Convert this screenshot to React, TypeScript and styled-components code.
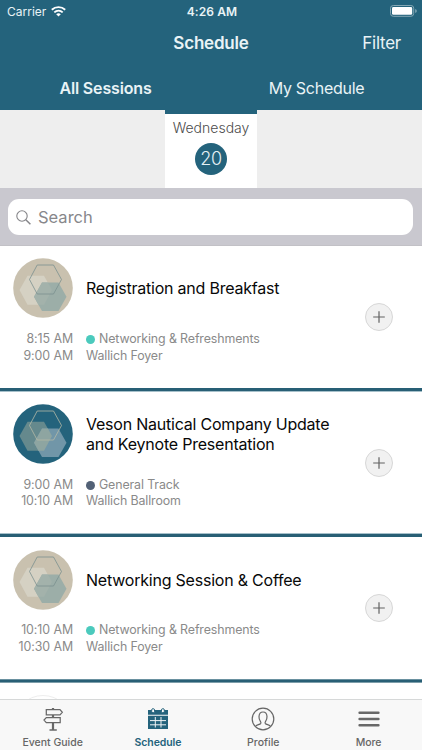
import React from 'react';
import styled, { createGlobalStyle, css } from 'styled-components';

const teal = '#24637c';

const GlobalStyle = createGlobalStyle`
  * { box-sizing: border-box; }
  body { margin: 0; background: #fff; font-family: Inter, "Liberation Sans", sans-serif; }
`;

const Screen = styled.div`
  width: 422px;
  height: 750px;
  display: flex;
  flex-direction: column;
  overflow: hidden;
  background: #fff;
`;

const Header = styled.header`
  flex: none;
  height: 110px;
  background: ${teal};
  color: #e9f3f6;
`;

const StatusBar = styled.div`
  height: 22px;
  display: grid;
  grid-template-columns: 1fr auto 1fr;
  align-items: center;
  padding: 0 5px 0 7px;
`;

const Carrier = styled.div`
  display: flex;
  align-items: center;
  gap: 5px;
`;

type TextProps = { $size: number; $weight?: number; $spacing?: number };
const Text = styled.span<TextProps>`
  display: block;
  white-space: nowrap;
  font-size: ${p => p.$size}px;
  font-weight: ${p => p.$weight ?? 400};
  letter-spacing: ${p => p.$spacing ?? 0}px;
`;

const BatterySlot = styled.div`
  display: flex;
  justify-content: flex-end;
`;

const NavBar = styled.div`
  height: 42px;
  display: grid;
  grid-template-columns: 1fr auto 1fr;
  align-items: center;
  padding: 0 21px;
`;

const FilterButton = styled(Text)`
  justify-self: end;
`;

const Segments = styled.div`
  height: 46px;
  display: grid;
  grid-template-columns: 1fr 1fr;
  justify-items: center;
  padding-top: 14px;
  line-height: 20px;
`;

const DateStrip = styled.div`
  flex: none;
  height: 78px;
  display: flex;
  justify-content: center;
  background: #eeeeee;
`;

const Day = styled.div`
  width: 92px;
  display: flex;
  flex-direction: column;
  align-items: center;
  border-top: 4px solid ${teal};
  background: #fff;
  color: #4c4c4c;
  line-height: 28px;
`;

const DayNumber = styled.div`
  width: 32px;
  height: 32px;
  margin-top: 1px;
  border-radius: 50%;
  display: flex;
  align-items: center;
  justify-content: center;
  background: ${teal};
  color: #e4f0f4;
`;

const SearchBar = styled.div`
  flex: none;
  height: 58px;
  padding: 11px 9px 10px 8px;
  background: #c9c8cf;
  border-bottom: 1px solid #c2c1c6;
`;

const SearchField = styled.div`
  height: 36px;
  border-radius: 11px;
  display: flex;
  align-items: center;
  padding-left: 8px;
  gap: 7px;
  background: #fff;
  color: #87878b;
`;

const List = styled.main`
  flex: 1;
  min-height: 0;
  overflow: hidden;
`;

const Row = styled.article`
  height: 145.6px;
  display: flex;
  flex-direction: column;
`;

const RowBody = styled.div`
  flex: 1;
  display: grid;
  grid-template-columns: 60px 1fr 28px;
  grid-template-rows: 60px 34px;
  column-gap: 13px;
  row-gap: 12.7px;
  padding: 12.4px 29px 0 13px;
`;

const Titles = styled.div`
  align-self: center;
  padding-top: 1.6px;
  line-height: 19.6px;
  color: #080808;
`;

const Times = styled.div`
  grid-row: 2;
  grid-column: 1;
  display: flex;
  flex-direction: column;
  align-items: flex-end;
  line-height: 16.7px;
  color: #8a8a8a;
`;

const Details = styled.div`
  grid-row: 2;
  grid-column: 2;
  line-height: 16.7px;
  color: #8a8a8a;
`;

const Track = styled.div`
  display: flex;
  align-items: center;
  gap: 4px;
`;

const Dot = styled.i<{ $color: string }>`
  width: 9px;
  height: 9px;
  border-radius: 50%;
  background: ${p => p.$color};
`;

const AddButton = styled.button`
  grid-column: 3;
  grid-row: 1 / 3;
  width: 28px;
  height: 28px;
  margin-top: 44.6px;
  padding: 0;
  border: 1px solid #d7d7d7;
  border-radius: 50%;
  display: grid;
  place-items: center;
  background: #f1f1f1;
`;

const Divider = styled.div<{ $top: string; $bottom: string }>`
  flex: none;
  height: 4px;
  background: linear-gradient(${p => p.$top} 1px, #285f75 1px 3px, ${p => p.$bottom} 3px);
`;

const NextAvatar = styled.div`
  width: 60px;
  height: 60px;
  margin: 12px 13px;
  border: 1px solid #eeeeee;
  border-radius: 50%;
`;

const TabBar = styled.nav`
  flex: none;
  height: 51px;
  display: grid;
  grid-template-columns: repeat(4, 105.3px);
  border-top: 1px solid #d6d8d8;
  background: #f8f8f8;
`;

const Tab = styled.div<{ $active?: boolean }>`
  display: flex;
  flex-direction: column;
  align-items: center;
  padding-top: 6px;
  color: #666;
  line-height: 16px;
  ${p => p.$active && css`color: ${teal};`}
  svg { display: block; height: 26px; margin-bottom: 3px; }
`;

function HexAvatar({ dark }: { dark?: boolean }) {
  return (
    <svg width="60" height="60" viewBox="0 0 60 60">
      <circle cx="30" cy="30" r="29.8" fill={dark ? teal : '#c9c1af'} />
      <path d="M6.5 32 14.5 17.8H31L39 32 31 46.7H14.5Z" fill={dark ? '#65898d' : '#d5d1c3'} />
      <path d="M21 38.8 29 24.5H45.5L53.5 38.8 45.5 53H29Z" fill={dark ? '#7196a8' : '#9caea8'} />
      <path d="M29 24.5H34.9L39 32 31 46.7H25.4L21 38.8Z" fill={dark ? '#8ea5a1' : '#a3b2ab'} />
      <path d="M16.5 21.5 24.2 7H40.5L48.5 21.5 40.5 36H24.2Z" fill="none" stroke={dark ? '#b5b9a6' : '#7b918f'} strokeWidth=".8" />
    </svg>
  );
}

const WifiIcon = () => (
  <svg width="15" height="11" viewBox="0 0 15 11" fill="none" stroke="#fff" strokeWidth="1.9">
    <path d="M.8 3.8C4.6.2 10.4.2 14.2 3.8M3.3 6.4c2.4-2.2 6-2.2 8.4 0" />
    <path d="M5.2 8.2c1.3-1.2 3.3-1.2 4.6 0L7.5 10.5Z" fill="#fff" stroke="none" />
  </svg>
);

const BatteryIcon = () => (
  <svg width="27" height="12" viewBox="0 0 27 12">
    <rect x=".5" y=".5" width="23.2" height="10.8" rx="2.8" fill="none" stroke="#84a7b4" />
    <rect x="2" y="2" width="20.2" height="7.8" rx="1.4" fill="#fff" />
    <path d="M25 4q2 .4 2 2t-2 2Z" fill="#6f9aaa" />
  </svg>
);

const SearchIcon = () => (
  <svg width="15" height="15" viewBox="0 0 15 15" fill="none" stroke="#858589" strokeWidth="1.1">
    <circle cx="6" cy="6" r="5.2" />
    <path d="m9.8 9.8 4.6 4.4" strokeWidth="1.5" />
  </svg>
);

const PlusIcon = () => (
  <svg width="12" height="12" viewBox="0 0 12 12" stroke="#626262" strokeWidth="1.2">
    <path d="M6 .2V11.8M.2 6H11.8" />
  </svg>
);

const SignpostIcon = () => (
  <svg width="22" height="26" viewBox="0 0 22 26" fill="none" stroke="#686868" strokeWidth="1.25">
    <path d="M4.3 3.7H18L20.3 6.3 18 8.9H4.3ZM18.2 11.5H4.3L2 14.1 4.3 16.7H18.2Z" />
    <path d="M11 2V3.7M11 8.9V11.5M11 16.7V24" strokeWidth="2.2" />
    <path d="M7.5 24H14.8" strokeWidth="1.5" />
  </svg>
);

const CalendarIcon = () => (
  <svg width="22" height="26" viewBox="0 0 22 26" fill="none">
    <path d="M1 4H21V8.8H1ZM1 9.8H21V23H1Z" fill={teal} />
    <path d="M3 14.6H19M3 18.8H19M8.3 11V21.5M14 11V21.5" stroke="#f0f4f5" />
    <rect x="4.7" y="2.7" width="2.8" height="4" rx="1.2" fill="#f8f8f8" stroke={teal} />
    <rect x="14.5" y="2.7" width="2.8" height="4" rx="1.2" fill="#f8f8f8" stroke={teal} />
  </svg>
);

const ProfileIcon = () => (
  <svg width="24" height="26" viewBox="0 0 24 26" fill="none" stroke="#666" strokeWidth="1.2">
    <circle cx="12" cy="13" r="10.8" />
    <path d="M4.4 20.5C5.2 18.8 8.6 18.7 9.7 17.5 10.2 16.9 9.9 16.2 9.4 15.4 8.2 13.7 7.9 12.3 8 10.6 8.1 7.9 9.6 6 12 6s3.9 1.9 4 4.6c.1 1.7-.2 3.1-1.4 4.8-.5.8-.8 1.5-.3 2.1 1.1 1.2 4.5 1.3 5.3 3" />
  </svg>
);

const MenuIcon = () => (
  <svg width="22" height="26" viewBox="0 0 22 26" stroke="#686868" strokeWidth="2.5" strokeLinecap="round">
    <path d="M1.6 6.7H20.4M1.6 13H20.4M1.6 19.3H20.4" />
  </svg>
);

type Session = {
  titles: string[];
  start: string;
  end: string;
  track: string;
  room: string;
  color: string;
  dark?: boolean;
  edges: [string, string];
};

const sessions: Session[] = [
  {
    titles: ['Registration and Breakfast'],
    start: '8:15 AM', end: '9:00 AM', track: 'Networking & Refreshments', room: 'Wallich Foyer',
    color: '#4bcabd', edges: ['#285f75', '#a6c0ca'],
  },
  {
    titles: ['Veson Nautical Company Update', 'and Keynote Presentation'],
    start: '9:00 AM', end: '10:10 AM', track: 'General Track', room: 'Wallich Ballroom',
    color: '#526176', dark: true, edges: ['#a6c0ca', '#285f75'],
  },
  {
    titles: ['Networking Session & Coffee'],
    start: '10:10 AM', end: '10:30 AM', track: 'Networking & Refreshments', room: 'Wallich Foyer',
    color: '#4bcabd', edges: ['#6a91a0', '#7d9eaa'],
  },
];

const SessionRow = ({ s }: { s: Session }) => (
  <Row>
    <RowBody>
      <HexAvatar dark={s.dark} />
      <Titles>
        {s.titles.map(t => <Text key={t} $size={16} $spacing={-0.22}>{t}</Text>)}
      </Titles>
      <Times>
        <Text $size={12.4} $spacing={-0.08}>{s.start}</Text>
        <Text $size={12.4} $spacing={-0.08}>{s.end}</Text>
      </Times>
      <Details>
        <Track><Dot $color={s.color} /><Text $size={12.4} $spacing={-0.12}>{s.track}</Text></Track>
        <Text $size={12.4} $spacing={-0.12}>{s.room}</Text>
      </Details>
      <AddButton aria-label="Add session"><PlusIcon /></AddButton>
    </RowBody>
    <Divider $top={s.edges[0]} $bottom={s.edges[1]} />
  </Row>
);

export default function App() {
  return (
    <>
      <GlobalStyle />
      <Screen>
        <Header>
          <StatusBar>
            <Carrier><Text $size={12}>Carrier</Text><WifiIcon /></Carrier>
            <Text $size={12} $weight={600} $spacing={0.1}>4:26 AM</Text>
            <BatterySlot><BatteryIcon /></BatterySlot>
          </StatusBar>
          <NavBar>
            <span />
            <Text $size={17} $weight={600} $spacing={-0.2}>Schedule</Text>
            <FilterButton $size={17} $spacing={-0.25}>Filter</FilterButton>
          </NavBar>
          <Segments>
            <Text $size={16} $weight={600} $spacing={-0.15}>All Sessions</Text>
            <Text $size={16} $spacing={-0.27}>My Schedule</Text>
          </Segments>
        </Header>
        <DateStrip>
          <Day>
            <Text $size={14} $weight={300}>Wednesday</Text>
            <DayNumber><Text $size={18} $weight={300} $spacing={-0.3}>20</Text></DayNumber>
          </Day>
        </DateStrip>
        <SearchBar>
          <SearchField><SearchIcon /><Text $size={16.5}>Search</Text></SearchField>
        </SearchBar>
        <List>
          {sessions.map(s => <SessionRow key={s.start} s={s} />)}
          <NextAvatar />
        </List>
        <TabBar>
          <Tab><SignpostIcon /><Text $size={10.5} $weight={500}>Event Guide</Text></Tab>
          <Tab $active><CalendarIcon /><Text $size={10.5} $weight={600} $spacing={-0.1}>Schedule</Text></Tab>
          <Tab><ProfileIcon /><Text $size={10.5} $weight={500}>Profile</Text></Tab>
          <Tab><MenuIcon /><Text $size={10.5} $weight={500} $spacing={-0.1}>More</Text></Tab>
        </TabBar>
      </Screen>
    </>
  );
}
